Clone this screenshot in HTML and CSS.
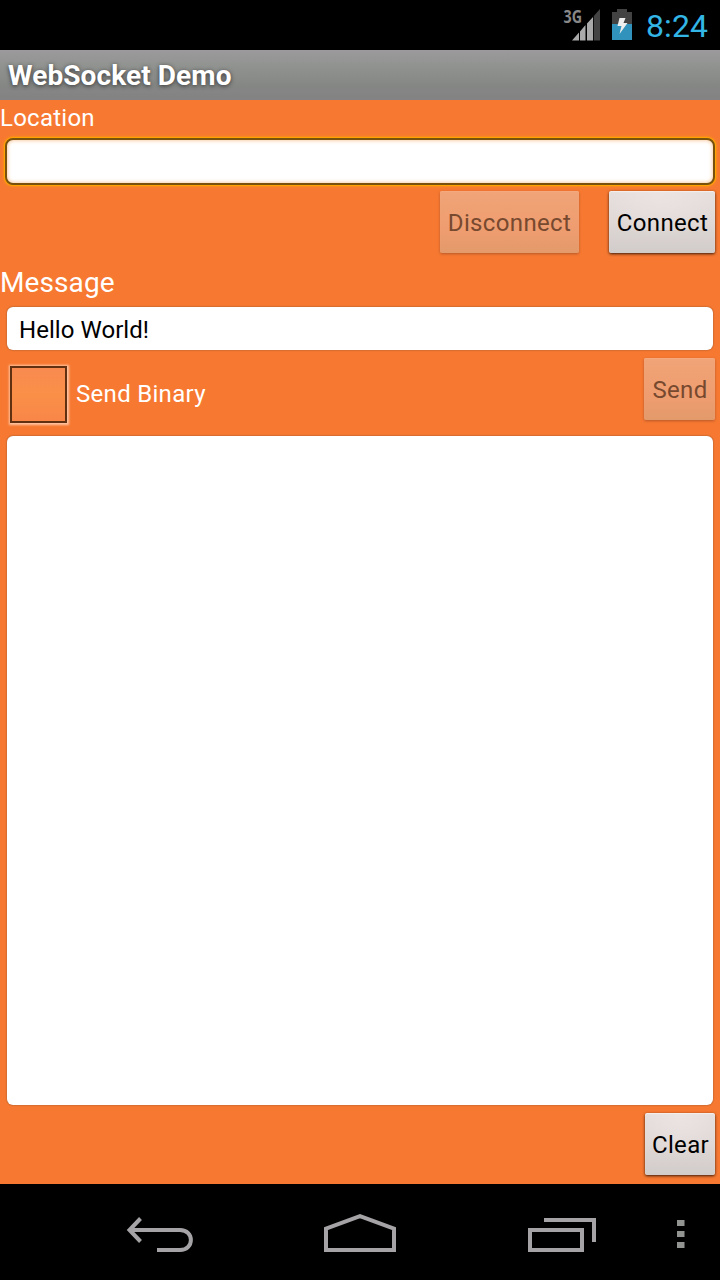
FILE: index.html
```html
<!DOCTYPE html>
<html lang="en">
<head>
<meta charset="utf-8">
<title>WebSocket Demo</title>
<link rel="stylesheet" href="styles.css">
</head>
<body>
<div class="screen">
  <div class="status-bar">
    <svg class="signal" width="40" height="50" viewBox="0 0 40 50">
      <text class="network" x="3.500" y="23" textLength="18.500" lengthAdjust="spacingAndGlyphs">3G</text>
      <path fill="#aaa" d="M12 40.500 19 32.500V40.500zM20 31.500 25.500 25V40.500H20zM27 23.500 33 17V40.500H27z"/>
      <path fill="#444" d="M33.800 16 40 9V40.500H33.800z"/>
    </svg>
    <svg class="battery" width="20" height="50" viewBox="0 0 20 50">
      <path fill="#424242" d="M5 9H15V12H20V24H0V12H5z"/>
      <path fill="#3193bb" d="M0 24H20V40H0z"/>
      <path fill="#eee" d="M7.500 18H13.500L11.500 23H15.500L7.500 34 9.500 26H5.500z"/>
    </svg>
    <span class="clock">8:24</span>
  </div>
  <header class="title-bar"><h1>WebSocket Demo</h1></header>
  <main class="content">
    <label class="label location-label" for="location">Location</label>
    <input class="field field-focused" id="location" type="text">
    <div class="actions">
      <button class="button button-disconnect" disabled><span>Disconnect</span></button>
      <button class="button button-connect"><span>Connect</span></button>
    </div>
    <label class="label message-label" for="message">Message</label>
    <input class="field message-field" id="message" type="text" value="Hello World!">
    <div class="send-row">
      <label class="check"><span class="check-box"></span><span class="check-text">Send Binary</span></label>
      <button class="button button-send" disabled><span>Send</span></button>
    </div>
    <div class="log"></div>
    <div class="footer"><button class="button button-clear"><span>Clear</span></button></div>
  </main>
  <nav class="nav-bar">
    <svg width="720" height="96" viewBox="0 0 720 96" fill="none" stroke="#a5a3a5" stroke-width="4">
      <path d="M140.500 34.500 129.500 46 140.500 57.500M130 46H180C194.500 46 194.500 66 180 66H157"/>
      <path d="M326 66V44.600L360 32.200 394 44.600V66z"/>
      <path d="M530 46H582V66H530zM544 36H594V58"/>
      <path fill="#929492" stroke="none" d="M677 36H684.500V42H677zM677 47H684.500V53H677zM677 58H684.500V64H677z"/>
    </svg>
  </nav>
</div>
</body>
</html>
```

FILE: styles.css
```css
* { box-sizing: border-box; }
body { margin: 0; background: #000; font-family: Roboto, sans-serif; }
.screen { width: 720px; height: 1280px; display: flex; flex-direction: column; overflow: hidden; }
.status-bar { height: 50px; display: flex; justify-content: flex-end; padding-right: 12px; background: #000; }
.signal { margin-right: 12px; }
.network { fill: #888; font: 700 18px "Open Sans", sans-serif; }
.battery { margin-right: 14px; }
.clock { width: 62px; font-size: 32px; line-height: 53px; color: #33b5e5; letter-spacing: .1px; white-space: nowrap; }
.title-bar { height: 50px; padding-left: 8px; background: linear-gradient(#9c9a9c, #919391 30%, #848684 75%, #848284); }
.title-bar h1 { margin: 0; font-size: 28px; line-height: 51px; font-weight: 700; color: #fff; text-shadow: 0 1px 4px #333; letter-spacing: .1px; }
.content { height: 1084px; display: flex; flex-direction: column; background: #f77931; }
.label { display: block; color: #fff; white-space: nowrap; }
.location-label { height: 38px; font-size: 24px; line-height: 36px; letter-spacing: .25px; }
.message-label { height: 47px; margin-top: 6px; font-size: 28px; line-height: 46px; letter-spacing: .1px; }
.field { display: block; margin: 0 7px; width: 706px; border: 0; border-radius: 6px; background: #fff; padding: 0 12px; color: #000; font: 24px Roboto, sans-serif; outline: 0; box-shadow: 0 0 2px #87502f; }
.field-focused { height: 47px; margin: 0 5px; width: 710px; border: 2px solid #79500c; border-radius: 8px; box-shadow: 0 0 1px 1px #ffa600, 0 0 3px 1px #ff9d10, inset 0 0 4px #f9b77d; }
.message-field { height: 43px; padding-top: 3px; letter-spacing: .05px; }
.actions { height: 69px; display: flex; justify-content: flex-end; gap: 30px; padding: 6px 5px 0; }
.button { height: 62px; border: 0; border-radius: 2px; padding: 1px 0 0; display: flex; align-items: center; justify-content: center; background: radial-gradient(ellipse 65% 75% at 50% 0, #ece4e3, transparent), linear-gradient(#e3dddb, #dfd8d5 50%, #d1cbca); color: #000; font: 24px Roboto, sans-serif; letter-spacing: .35px; box-shadow: 0 1px 3px #36180b, inset 0 1px 1px #f5efed; white-space: nowrap; }
.button:disabled { color: #77492f; background: linear-gradient(#f0a477, #ef9d70 60%, #e39a6a); box-shadow: 0 1px 3px #b6572a, inset 0 1px 1px #f4aa80; }
.button-disconnect { width: 139px; }
.button-connect { width: 106px; padding-left: 1px; }
.button-send { width: 71px; padding-left: 1px; }
.button-clear { width: 70px; padding-left: 1px; }
.send-row { height: 86px; display: flex; justify-content: space-between; padding: 8px 5px 0; }
.check { display: flex; align-items: flex-start; padding: 8px 0 0 5px; }
.check-box { width: 57px; height: 57px; border: 2px solid #613011; background: linear-gradient(#f88a50, #fa9048 50%, #f88648); box-shadow: 0 0 2px 1.500px #ffc3a0; }
.check-text { margin-left: 9px; color: #fff; font-size: 24px; line-height: 57px; letter-spacing: .3px; white-space: nowrap; }
.log { height: 669px; margin: 0 7px; border-radius: 6px; background: #fff; box-shadow: 0 0 2px #87502f; }
.footer { display: flex; justify-content: flex-end; padding: 8px 5px 0; }
.nav-bar { height: 96px; background: #000; }
.nav-bar svg { display: block; }
```
